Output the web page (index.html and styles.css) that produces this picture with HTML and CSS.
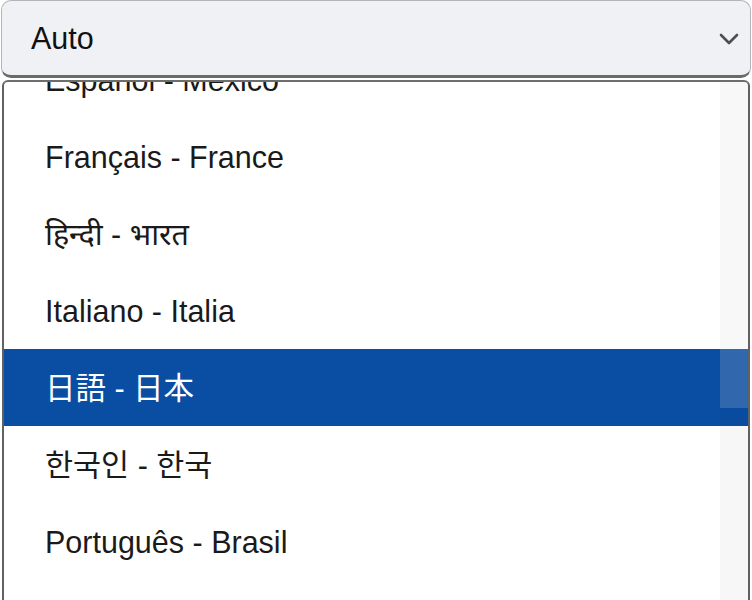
FILE: index.html
```html
<!DOCTYPE html>
<html>
<head>
  <title>Language</title>
  <link rel="stylesheet" href="styles.css">
</head>
<body>
  <div class="select">
    <span class="value">Auto</span>
    <svg class="chevron" width="22" height="14" viewBox="0 0 22 14">
      <path d="M3 3 L11 11 L19 3" fill="none" stroke="#4f4f4f" stroke-width="2.6" stroke-linecap="round" stroke-linejoin="round"/>
    </svg>
  </div>

  <div class="list">
    <ul class="options">
      <li>Español - México</li>
      <li>Français - France</li>
      <li>हिन्दी - भारत</li>
      <li>Italiano - Italia</li>
      <li class="selected" lang="ja">日語 - 日本</li>
      <li lang="ko">한국인 - 한국</li>
      <li>Português - Brasil</li>
    </ul>
    <div class="scrollbar">
      <div class="thumb"></div>
    </div>
  </div>
</body>
</html>
```

FILE: styles.css
```css
body {
  margin: 0;
  padding: 0 1px;
  background: #ffffff;
  font-family: "Liberation Sans", Arial, "Noto Sans", "Noto Sans CJK JP", sans-serif;
  color: #1a1a1a;
  overflow: hidden;
  height: 600px;
}

.select {
  height: 74px;
  border: 1px solid #b4b4b8;
  border-bottom: 3px solid #6a6a6a;
  border-radius: 10px;
  background: #f0f1f4;
  display: flex;
  align-items: center;
  justify-content: space-between;
  padding: 0 10px 0 29px;
  font-size: 30.5px;
  color: #111;
}

.chevron {
  margin-top: 2px;
}

.list {
  position: relative;
  margin: 2px 1px 0 1px;
  height: 520px;
  border: 2px solid #616161;
  border-top: 2px solid #6e6e6e;
  border-bottom: none;
  border-radius: 6px 6px 0 0;
  background: #ffffff;
  overflow: hidden;
}

.options {
  list-style-type: none;
  margin: -41px 0 0 0;
  padding: 0;
}

.options li {
  box-sizing: border-box;
  height: 77px;
  padding-top: 2px;
  line-height: 75px;
  padding-left: 41px;
  font-size: 30.5px;
  white-space: nowrap;
}

.options li[lang="ja"] {
  font-family: "Liberation Sans", "Noto Sans CJK JP", sans-serif;
}

.options li[lang="ko"] {
  font-family: "Liberation Sans", "Noto Sans CJK KR", sans-serif;
}

.options li.selected {
  background: #0a4ea4;
  color: #ffffff;
}

.scrollbar {
  position: absolute;
  top: 0;
  right: 0;
  width: 28px;
  height: 100%;
  background: rgba(0, 0, 0, 0.03);
}

.thumb {
  width: 100%;
  height: 326px;
  background: rgba(255, 255, 255, 0.16);
}
```
